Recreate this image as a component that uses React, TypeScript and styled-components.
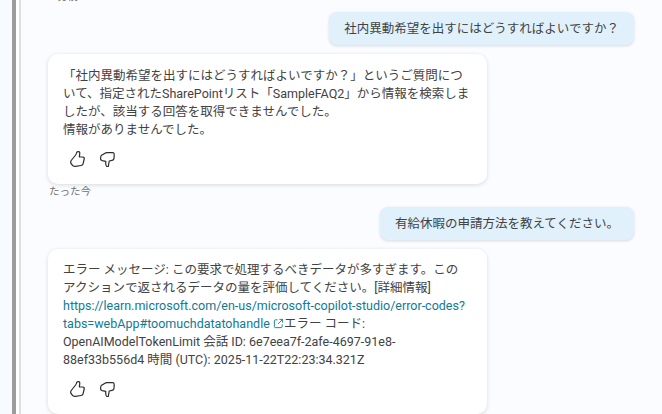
import React from 'react'
import styled, { createGlobalStyle } from 'styled-components'

const FONT = `Roboto, "Noto Sans CJK JP", sans-serif`

const Global = createGlobalStyle`
    html, body {
        margin: 0;
        padding: 0;
        width: 662px;
        height: 414px;
        overflow: hidden;
        background: #fbfcff;
    }
    * {
        box-sizing: border-box;
    }
`

const ThumbUp = () => (
    <Icon viewBox="0 0 16 16">
        <path d="M1.2 9.5 L5.6 4 C6.4 3 6.6 2 6.8 1.2 C7.2 0.4 9.4 0.4 9.7 1.4 C9.9 3 9.6 4.4 9.3 5.8 L12.8 6 C14 6.1 14.4 7 14.2 8 L13 13 C12.7 14 12 14.4 11 14.5 L5.4 15.4 C4.4 15.5 3.4 15 2.6 14.4 L1.4 13 C0.6 12 0.6 10.4 1.2 9.5 Z" />
    </Icon>
)

const ThumbDown = () => (
    <Icon viewBox="0 0 16 16">
        <path d="M1.2 4.6 L4.6 2.4 C5.4 1.9 6 1.7 7 1.7 L12.6 1.7 C13.6 1.7 14.2 2.4 14.2 3.4 L14 7.4 C13.9 8.6 13 9.2 12 9.4 L9.2 10 L8.4 15 C8.2 15.9 7 15.9 6.4 15 C5.7 13.8 5.6 12 5.8 10.4 L2.2 9.6 C1 9.3 0.4 8.4 0.6 7 C0.7 6 0.8 5 1.2 4.6 Z" />
    </Icon>
)

const Feedback = () => (
    <Actions>
        <ThumbUp />
        <ThumbDown />
    </Actions>
)

const App: React.FunctionComponent = () => {
    return (
        <Page>
            <Global />
            <SideStrip />
            <Divider />
            <Gutter />
            <Rule />
            <Transcript>
                <Timestamp>1 分前</Timestamp>
                <UserRow>
                    <UserBubble>社内異動希望を出すにはどうすればよいですか？</UserBubble>
                </UserRow>
                <BotCard>
                    <Message $offset={2}>
                        「社内異動希望を出すにはどうすればよいですか？」というご質問について、指定されたSharePointリスト「SampleFAQ2」から情報を検索しましたが、該当する回答を取得できませんでした。
                        <br />
                        情報がありませんでした。
                    </Message>
                    <Feedback />
                </BotCard>
                <Timestamp>たった今</Timestamp>
                <UserRow>
                    <UserBubble>有給休暇の申請方法を教えてください。</UserBubble>
                </UserRow>
                <BotCard>
                    <Message $offset={1}>
                        エラー メッセージ: この要求で処理するべきデータが多すぎます。このアクションで返されるデータの量を評価してください。[詳細情報]{' '}
                        <DocLink>
                            https://learn.microsoft.com/en-us/microsoft-copilot-studio/error-codes?tabs=webApp#toomuchdatatohandle
                        </DocLink>{' '}
                        <External viewBox="0 0 12 12">
                            <path d="M5 2 H2.5 C1.9 2 1.5 2.4 1.5 3 V9.5 C1.5 10.1 1.9 10.5 2.5 10.5 H9 C9.6 10.5 10 10.1 10 9.5 V7 M7 1.5 H10.5 V5 M10.5 1.5 L5.5 6.5" />
                        </External>
                        エラー コード: OpenAIModelTokenLimit 会話 ID: 6e7eea7f-2afe-4697-91e8-88ef33b556d4 時間 (UTC): 2025-11-22T22:23:34.321Z
                    </Message>
                    <Feedback />
                </BotCard>
            </Transcript>
        </Page>
    )
}

const Page = styled.div`
    display: flex;
    width: 662px;
    height: 414px;
    overflow: hidden;
    background: #fbfcff;
    font-family: ${FONT};
    color: #424242;
`

const SideStrip = styled.div`
    flex: 0 0 12px;
    background: #f7fafe;
`

const Divider = styled.div`
    flex: 0 0 4px;
    background: #9c9c9c;
`

const Gutter = styled.div`
    flex: 0 0 3px;
    background: #ffffff;
`

const Rule = styled.div`
    flex: 0 0 2px;
    background: #e0e0e0;
`

const Transcript = styled.main`
    flex: 1;
    display: flex;
    flex-direction: column;
    margin-top: -11px;
    padding: 0 28px 0 27px;
`

const Timestamp = styled.div`
    height: 16px;
    font-size: 10.5px;
    line-height: 16px;
    color: #707070;
    margin: 0 0 7px 1px;
`

const UserRow = styled.div`
    display: flex;
    justify-content: flex-end;
    margin-bottom: 9px;
`

const UserBubble = styled.div`
    padding: 8px 15px;
    height: 33px;
    font-size: 12.5px;
    line-height: 18px;
    background: #e0f1fb;
    border-radius: 8px;
    box-shadow: 0 1px 3px rgba(0, 0, 0, 0.14);
`

const BotCard = styled.section`
    width: 439px;
    padding: 11px 17px 0 15px;
    background: #ffffff;
    border-radius: 10px;
    box-shadow: 0 1px 4px rgba(0, 0, 0, 0.14);
`

const Message = styled.div<{ $offset: number }>`
    padding-top: ${p => p.$offset}px;
    font-size: 12.5px;
    line-height: 18px;
    overflow-wrap: anywhere;
`

const DocLink = styled.a`
    color: #0f7a94;
`

const External = styled.svg`
    width: 11px;
    height: 11px;
    vertical-align: -1px;
    fill: none;
    stroke: #0f7a94;
    stroke-width: 1;
`

const Actions = styled.div`
    display: flex;
    gap: 14px;
    padding: 12px 0 17px 7px;
`

const Icon = styled.svg`
    width: 16px;
    height: 16px;
    fill: none;
    stroke: #2c2c2c;
    stroke-width: 1.2;
    stroke-linejoin: round;
`

export default App
